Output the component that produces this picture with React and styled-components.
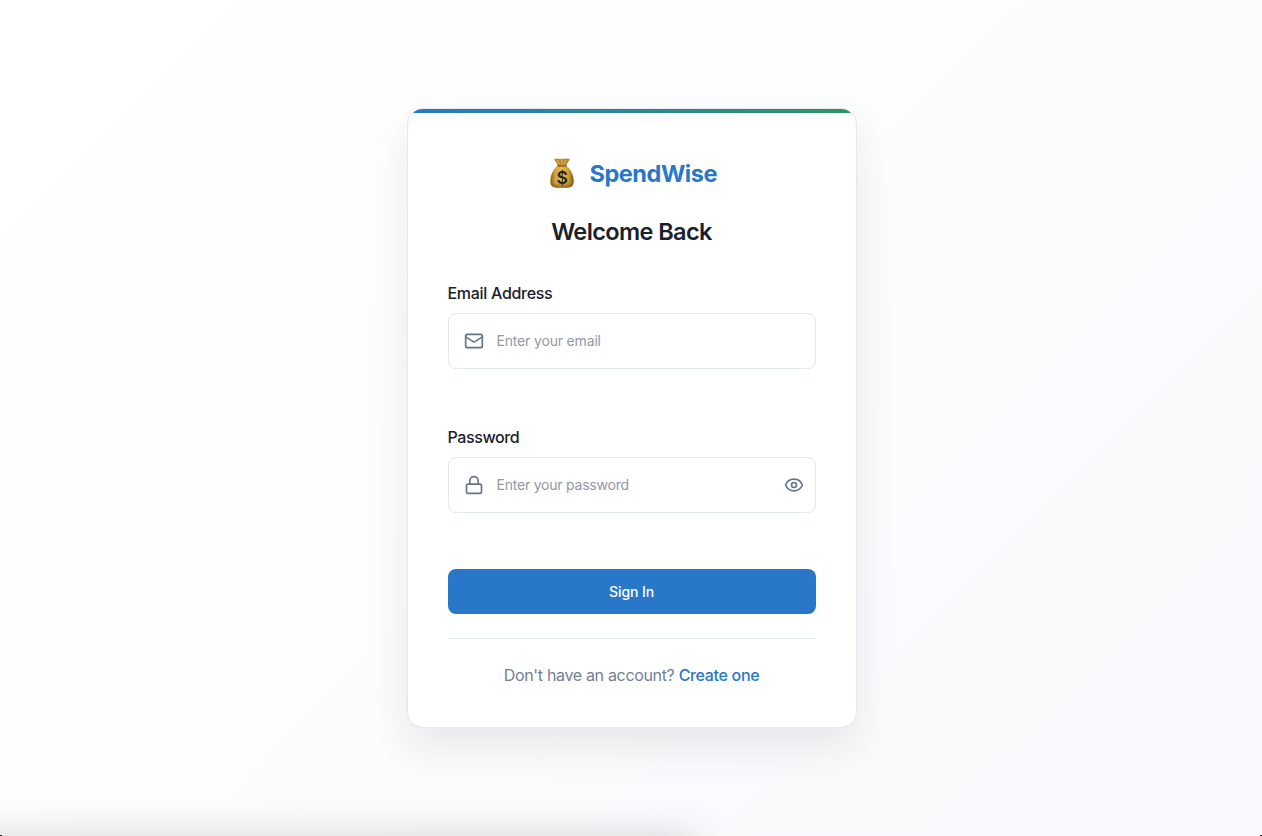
import React, { useState } from 'react';
import styled, { createGlobalStyle } from 'styled-components';
import { Mail, Lock, Eye, EyeOff } from 'lucide-react';

const GlobalStyle = createGlobalStyle`
  *, *::before, *::after { box-sizing: border-box; }
  html, body { margin: 0; padding: 0; overflow: hidden; }
  body { font-family: Inter, "Liberation Sans", sans-serif; color: #1a202c; }
`;

const Page = styled.main`
  position: relative;
  height: 100vh;
  padding-left: 1px;
  display: flex;
  align-items: center;
  justify-content: center;
  overflow: hidden;
  background: linear-gradient(135deg, #ffffff 0%, #f7f9fc 100%);
`;

const Dock = styled.div`
  position: absolute;
  top: calc(100% + 6px);
  left: -60px;
  width: 755px;
  height: 60px;
  box-shadow: 0 0 44px rgba(0, 0, 0, 0.2);
`;

const Corner = styled.i`
  position: absolute;
  bottom: 0;
  ${({ $side }) => $side}: 0;
  width: 2px;
  height: 1px;
  background: #222;
`;

const Card = styled.section`
  position: relative;
  width: 450px;
  height: 620px;
  padding: 40px;
  display: flex;
  flex-direction: column;
  background: #fff;
  border: 1px solid #e2e8f0;
  border-radius: 16px;
  overflow: hidden;
  box-shadow: 0 20px 40px rgba(0, 0, 0, 0.08);

  &::before {
    content: '';
    position: absolute;
    inset: 0 0 auto;
    height: 4px;
    background: linear-gradient(90deg, #2977c9, #2f9560);
  }
`;

const Brand = styled.div`
  display: flex;
  align-items: center;
  justify-content: center;
  gap: 11.5px;
  height: 48px;
`;

const BrandName = styled.span`
  padding-top: 2px;
  font-size: 23.5px;
  font-weight: 700;
  line-height: 36px;
  letter-spacing: -0.45px;
  color: #2977c9;
`;

const Title = styled.h1`
  margin: 17px 0 0;
  font-size: 23.5px;
  font-weight: 600;
  line-height: 36px;
  letter-spacing: -0.6px;
  text-align: center;
`;

const Form = styled.form`
  display: flex;
  flex-direction: column;
  margin-top: 31px;
`;

const Field = styled.div`
  display: flex;
  flex-direction: column;
  gap: 8px;
  height: 144px;
`;

const Label = styled.label`
  font-size: 16px;
  font-weight: 500;
  line-height: 24px;
  letter-spacing: ${({ $track }) => $track};
`;

const InputBox = styled.div`
  display: flex;
  align-items: center;
  gap: 13px;
  height: 56px;
  padding: 0 11px 0 15px;
  border: 1px solid #e2e8f0;
  border-radius: 8px;
  color: #64748b;

  svg { display: block; flex: none; }
`;

const Input = styled.input`
  flex: 1;
  min-width: 0;
  padding: 0;
  border: 0;
  outline: 0;
  background: transparent;
  color: #1a202c;
  font: 400 14px/20px Inter, sans-serif;
  letter-spacing: ${({ $track }) => $track};
  &::placeholder { color: #9299a6; opacity: 1; }
`;

const IconButton = styled.button`
  display: flex;
  padding: 0;
  border: 0;
  background: none;
  color: inherit;
  cursor: pointer;
`;

const Submit = styled.button`
  height: 45px;
  border: 0;
  border-radius: 8px;
  background: #2977c9;
  color: #fff;
  font: 500 14px/21px Inter, sans-serif;
  letter-spacing: -0.1px;
  cursor: pointer;
`;

const Footer = styled.p`
  margin: 24px 0 0;
  padding-top: 24px;
  border-top: 1px solid #e2e8f0;
  text-align: center;
  font-size: 16px;
  line-height: 24px;
  letter-spacing: -0.33px;
  color: #718096;
`;

const Link = styled.a`
  color: #2977c9;
  font-weight: 500;
  text-decoration: none;
`;

function MoneyBag() {
  return (
    <svg width="32" height="32" viewBox="0 0 32 32" aria-hidden="true">
      <defs>
        <linearGradient id="bagBody" x1="0" x2="1">
          <stop offset="0" stopColor="#8c6119" />
          <stop offset=".22" stopColor="#d3a43a" />
          <stop offset=".5" stopColor="#e9bf52" />
          <stop offset=".8" stopColor="#cb9934" />
          <stop offset="1" stopColor="#805513" />
        </linearGradient>
        <linearGradient id="bagShade" x1="0" x2="0" y1="0" y2="1">
          <stop offset=".75" stopColor="#6b430c" stopOpacity="0" />
          <stop offset="1" stopColor="#6b430c" stopOpacity=".7" />
        </linearGradient>
      </defs>
      <path d="M8 1.600c1.600.7 2.600.2 3.800-.2 1.500.6 2.700 1 4.200.1 1.500.7 2.900.3 4.200-.2 1.300.6 2.500.8 3.800.2-.8 2.600-2.500 4.700-4 6.500h-7.800C10.600 6.200 8.800 4.300 8 1.600Z" fill="#b88527" />
      <path d="m11.200 3 2.800 5m1.700-5.600L16 8m4-5.200L17.800 8" stroke="#ecc765" strokeWidth="1" fill="none" />
      <path d="M12.100 8.500h7.800c4 2.600 7.800 9 7.800 15.500 0 4.700-2 6.500-6.700 6.800H11c-4.700-.3-6.700-2.100-6.700-6.800 0-6.500 3.800-12.900 7.800-15.500Z" fill="url(#bagBody)" />
      <path d="M12.100 8.500h7.800c4 2.600 7.800 9 7.800 15.500 0 4.700-2 6.500-6.700 6.800H11c-4.700-.3-6.700-2.100-6.700-6.800 0-6.500 3.800-12.900 7.800-15.500Z" fill="url(#bagShade)" />
      <rect x="11.300" y="7.300" width="9.400" height="2.400" rx="1.200" fill="#8a5b17" />
      <path d="M12.500 8h7" stroke="#d9a844" strokeWidth=".8" />
      <text x="16.100" y="26.600" textAnchor="middle" fontFamily="Inter, sans-serif" fontSize="17.500" fontWeight="600" fill="#26221c">$</text>
    </svg>
  );
}

export default function App() {
  const [visible, setVisible] = useState(false);
  return (
    <>
      <GlobalStyle />
      <Page>
        <Card>
          <Brand>
            <MoneyBag />
            <BrandName>SpendWise</BrandName>
          </Brand>
          <Title>Welcome Back</Title>
          <Form onSubmit={(e) => e.preventDefault()}>
            <Field>
              <Label htmlFor="email" $track="-0.3px">Email Address</Label>
              <InputBox>
                <Mail size={20} />
                <Input id="email" type="email" placeholder="Enter your email" $track="-0.17px" />
              </InputBox>
            </Field>
            <Field>
              <Label htmlFor="password" $track="-0.4px">Password</Label>
              <InputBox>
                <Lock size={20} />
                <Input id="password" type={visible ? 'text' : 'password'} placeholder="Enter your password" $track="-0.22px" />
                <IconButton type="button" aria-label="Toggle password visibility" onClick={() => setVisible(!visible)}>
                  {visible ? <EyeOff size={20} /> : <Eye size={20} />}
                </IconButton>
              </InputBox>
            </Field>
            <Submit type="submit">Sign In</Submit>
          </Form>
          <Footer>
            Don't have an account? <Link href="#">Create one</Link>
          </Footer>
        </Card>
        <Dock />
        <Corner $side="left" />
        <Corner $side="right" />
      </Page>
    </>
  );
}
